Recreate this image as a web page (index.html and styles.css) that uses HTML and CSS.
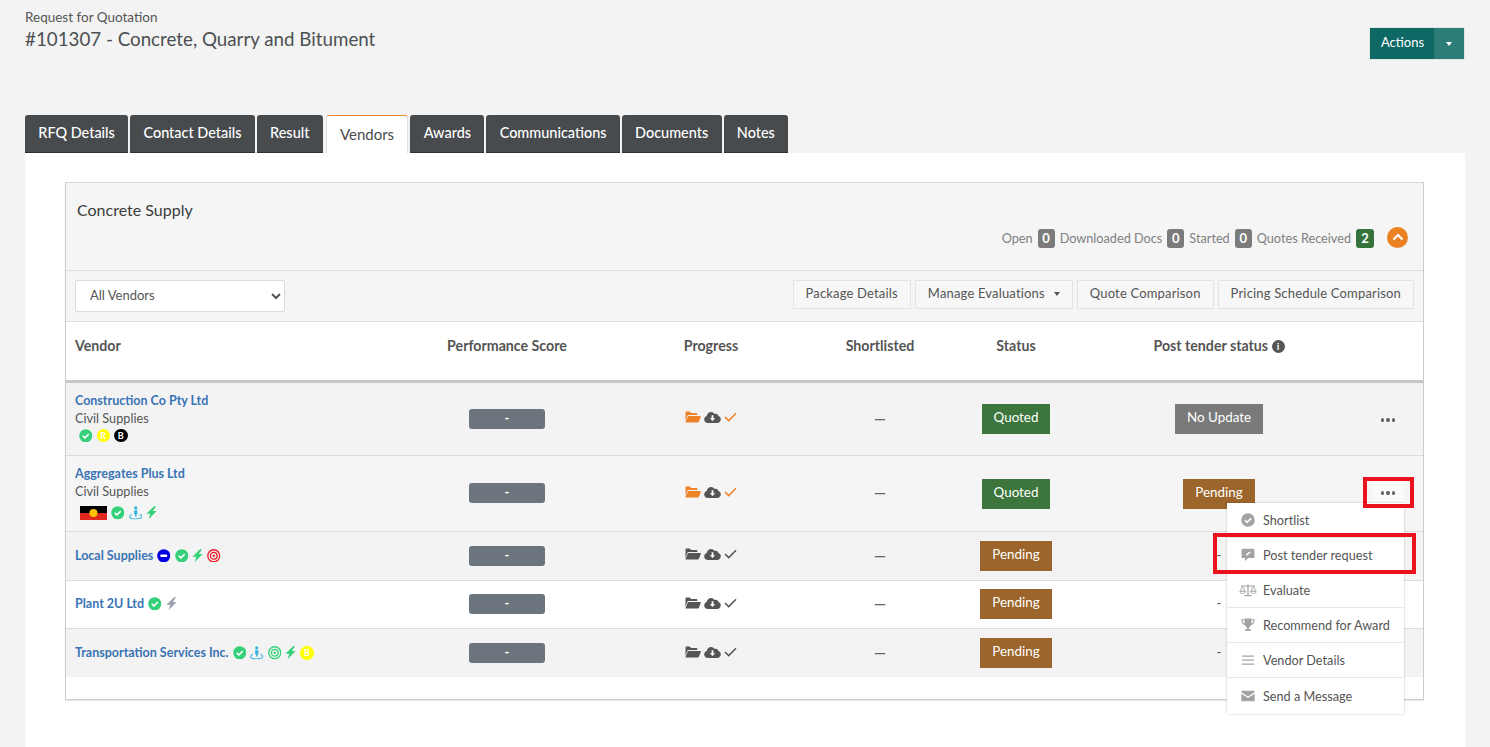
FILE: index.html
```html
<!DOCTYPE html>
<html lang="en">
<head>
<meta charset="utf-8">
<title>Request for Quotation</title>
<link rel="stylesheet" href="styles.css">
</head>
<body>
<svg class="defs" width="0" height="0" aria-hidden="true">
  <defs>
    <symbol id="i-check" viewBox="0 0 14 14"><circle cx="7" cy="7" r="6.800" fill="currentColor"/><path d="M3.900 7.200l2.200 2.100 4-4" fill="none" stroke="#fff" stroke-width="1.700"/></symbol>
    <symbol id="i-bolt" viewBox="0 0 12 14"><path d="M8.800 0L.4 8h4.300L2.800 14l8.800-9H7.300L11 0z" fill="currentColor"/></symbol>
    <symbol id="i-person" viewBox="0 0 14 14"><circle cx="7" cy="2" r="1.700" fill="currentColor"/><path d="M5.300 4.300h3.400v4.200h-.9V11H6.200V8.500h-.9z" fill="currentColor"/><path d="M3 8.500C1.500 9.100.7 9.900.7 10.800c0 1.500 2.800 2.700 6.300 2.700s6.300-1.200 6.300-2.700c0-.9-.8-1.700-2.300-2.300" fill="none" stroke="currentColor" stroke-width="1.200"/></symbol>
    <symbol id="i-target" viewBox="0 0 14 14"><circle cx="7" cy="7" r="6.200" fill="none" stroke="currentColor" stroke-width="1.400"/><circle cx="7" cy="7" r="3.500" fill="none" stroke="currentColor" stroke-width="1.400"/><circle cx="7" cy="7" r="1.300" fill="currentColor"/></symbol>
    <symbol id="i-minus" viewBox="0 0 14 14"><circle cx="7" cy="7" r="6.800" fill="#0000e0"/><rect x="3.500" y="5.800" width="7" height="2.400" rx=".6" fill="#fff"/></symbol>
    <symbol id="i-folder" viewBox="0 0 16 12"><path d="M.5 10V1.300C.5.800.9.500 1.300.500h3.400l1.400 1.400h5.400c.5 0 .8.300.8.800V4H4C3.200 4 2.500 4.400 2.200 5z" fill="currentColor"/><path d="M3.500 5h12c.3 0 .5.300.4.600l-2 5.200c-.2.400-.6.700-1 .7H.9c-.4 0-.6-.3-.4-.600L2.800 5.400c.1-.2.400-.4.700-.4z" fill="currentColor"/></symbol>
    <symbol id="i-cloud" viewBox="0 0 17 12"><path d="M4 12C1.800 12 .2 10.500.2 8.400c0-1.600 1-3 2.500-3.400C3 2.700 4.800 1 7 1c1.500 0 2.900.8 3.600 2 .4-.2.800-.3 1.200-.3 1.400 0 2.500 1 2.600 2.400 1.400.4 2.400 1.700 2.400 3.200C16.800 10.300 15.200 12 13.200 12z" fill="currentColor"/><path d="M7.600 4.200h1.800v3h1.800L8.500 10 5.800 7.200h1.800z" fill="#fff"/></symbol>
    <symbol id="i-tick" viewBox="0 0 13 10"><path d="M1 5l3.700 3.600L12 1.200" fill="none" stroke="currentColor" stroke-width="1.500"/></symbol>
    <symbol id="i-comment" viewBox="0 0 14 14"><path d="M1.500.8h11c.5 0 .9.400.9.900v7.500c0 .5-.4.900-.9.900H7.300L4 13V10.100H1.500c-.5 0-.9-.4-.9-.9V1.700c0-.5.400-.9.900-.9z" fill="currentColor"/><path d="M5 7.500l.3-1.500 3.200-2.600 1.100 1.200-3.100 2.600z" fill="#fff"/></symbol>
    <symbol id="i-scale" viewBox="0 0 18 14"><path d="M8.400 1.500h1.200V12h3v1.200H5.400V12h3zM2 2.600h14v1H2z" fill="currentColor"/><path d="M3.700 3.500L1 8.600c0 1.300 1.200 2 2.700 2s2.700-.7 2.700-2zM14.300 3.500l-2.700 5.100c0 1.300 1.200 2 2.700 2s2.700-.7 2.700-2z" fill="none" stroke="currentColor" stroke-width=".9"/><path d="M.8 8.300h5.800M11.400 8.300h5.800" stroke="currentColor" stroke-width="1"/></symbol>
    <symbol id="i-trophy" viewBox="0 0 14 14"><path d="M3.500.5h7v5c0 1.900-1.400 3.300-2.500 3.800v1.900h1.800V13H4.200v-1.800H6V9.300C4.900 8.800 3.500 7.400 3.500 5.500z" fill="currentColor"/><path d="M3.500 1.700H.9c0 3 1.100 4.300 3 4.700M10.500 1.700h2.600c0 3-1.100 4.300-3 4.700" fill="none" stroke="currentColor" stroke-width="1.100"/></symbol>
    <symbol id="i-bars" viewBox="0 0 14 14"><path d="M1 2.500h12v1.200H1zM1 6.500h12v1.200H1zM1 10.500h12v1.200H1z" fill="currentColor"/></symbol>
    <symbol id="i-env" viewBox="0 0 14 11"><path d="M.3 1.200C.3.600.7.200 1.300.200h11.400c.6 0 1 .4 1 1v.6L7 6 .3 1.800z" fill="currentColor"/><path d="M.3 3.200L7 7.400l6.700-4.200v6.600c0 .6-.4 1-1 1H1.300c-.6 0-1-.4-1-1z" fill="currentColor"/></symbol>
  </defs>
</svg>

<header class="page-head">
  <div class="head-text">
    <div class="kicker">Request for Quotation</div>
    <h1 class="title">#101307 - Concrete, Quarry and Bitument</h1>
  </div>
  <div class="actions"><span class="actions-main">Actions</span><span class="actions-caret"><i class="caret caret-white"></i></span></div>
</header>

<nav class="tabs">
  <a class="tab">RFQ Details</a>
  <a class="tab">Contact Details</a>
  <a class="tab">Result</a>
  <a class="tab tab-active">Vendors</a>
  <a class="tab">Awards</a>
  <a class="tab">Communications</a>
  <a class="tab">Documents</a>
  <a class="tab">Notes</a>
</nav>

<main class="sheet">
  <section class="panel">
    <div class="panel-head">
      <div class="panel-title">Concrete Supply</div>
      <div class="counts">
        <span>Open</span><b class="count">0</b>
        <span>Downloaded Docs</span><b class="count">0</b>
        <span>Started</span><b class="count">0</b>
        <span>Quotes Received</span><b class="count count-green">2</b>
        <span class="collapse"><svg width="12" height="8" viewBox="0 0 12 8"><path d="M1.500 6.500L6 2l4.500 4.500" fill="none" stroke="#fff" stroke-width="2.200"/></svg></span>
      </div>
    </div>
    <div class="toolbar">
      <select class="vendor-select"><option>All Vendors</option></select>
      <div class="tool-btns">
        <span class="tool-btn">Package Details</span>
        <span class="tool-btn">Manage Evaluations<i class="caret caret-dark"></i></span>
        <span class="tool-btn">Quote Comparison</span>
        <span class="tool-btn">Pricing Schedule Comparison</span>
      </div>
    </div>
    <table class="vendors">
      <colgroup>
        <col class="c-vendor"><col class="c-score"><col class="c-progress"><col class="c-short"><col class="c-status"><col class="c-post"><col class="c-act">
      </colgroup>
      <thead>
        <tr>
          <th class="left">Vendor</th><th>Performance Score</th><th>Progress</th><th>Shortlisted</th><th>Status</th>
          <th>Post tender status <span class="info">i</span></th><th></th>
        </tr>
      </thead>
      <tbody>
        <tr class="row-a shade">
          <td class="left">
            <div class="vcell">
              <a class="vname">Construction Co Pty Ltd</a>
              <div class="vsub">Civil Supplies</div>
              <div class="badges indent-a">
                <svg class="ic14 green"><use href="#i-check"/></svg>
                <span class="lettered yellow">R</span>
                <span class="lettered black">B</span>
              </div>
            </div>
          </td>
          <td><span class="score">-</span></td>
          <td><span class="prog"><svg class="fold orange"><use href="#i-folder"/></svg><svg class="cloud"><use href="#i-cloud"/></svg><svg class="tick orange"><use href="#i-tick"/></svg></span></td>
          <td><span class="dash">—</span></td>
          <td><span class="pill pill-green">Quoted</span></td>
          <td><span class="pill pill-grey">No Update</span></td>
          <td><span class="dots"><i></i><i></i><i></i></span></td>
        </tr>
        <tr class="row-b">
          <td class="left">
            <div class="vcell vcell-flag">
              <a class="vname">Aggregates Plus Ltd</a>
              <div class="vsub">Civil Supplies</div>
              <div class="badges indent-b">
                <svg class="flag" viewBox="0 0 27 14"><rect width="27" height="7" fill="#000"/><rect y="7" width="27" height="7" fill="#e0281f"/><circle cx="13.500" cy="7" r="4" fill="#ffc400"/></svg>
                <svg class="ic14 green"><use href="#i-check"/></svg>
                <svg class="ic14 blue"><use href="#i-person"/></svg>
                <svg class="bolt green"><use href="#i-bolt"/></svg>
              </div>
            </div>
          </td>
          <td><span class="score">-</span></td>
          <td><span class="prog"><svg class="fold orange"><use href="#i-folder"/></svg><svg class="cloud"><use href="#i-cloud"/></svg><svg class="tick orange"><use href="#i-tick"/></svg></span></td>
          <td><span class="dash">—</span></td>
          <td><span class="pill pill-green">Quoted</span></td>
          <td><span class="pill pill-brown">Pending</span></td>
          <td><span class="dots dots-open"><i></i><i></i><i></i></span></td>
        </tr>
        <tr class="row-c shade">
          <td class="left"><div class="inline-name"><a class="vname">Local Supplies</a>
            <svg class="ic14"><use href="#i-minus"/></svg>
            <svg class="ic14 green"><use href="#i-check"/></svg>
            <svg class="bolt green"><use href="#i-bolt"/></svg>
            <svg class="ic14 red"><use href="#i-target"/></svg></div>
          </td>
          <td><span class="score">-</span></td>
          <td><span class="prog"><svg class="fold"><use href="#i-folder"/></svg><svg class="cloud"><use href="#i-cloud"/></svg><svg class="tick"><use href="#i-tick"/></svg></span></td>
          <td><span class="dash">—</span></td>
          <td><span class="pill pill-brown">Pending</span></td>
          <td><span class="nil">-</span></td>
          <td></td>
        </tr>
        <tr class="row-d">
          <td class="left"><div class="inline-name"><a class="vname">Plant 2U Ltd</a>
            <svg class="ic14 green"><use href="#i-check"/></svg>
            <svg class="bolt slate"><use href="#i-bolt"/></svg></div>
          </td>
          <td><span class="score">-</span></td>
          <td><span class="prog"><svg class="fold"><use href="#i-folder"/></svg><svg class="cloud"><use href="#i-cloud"/></svg><svg class="tick"><use href="#i-tick"/></svg></span></td>
          <td><span class="dash">—</span></td>
          <td><span class="pill pill-brown">Pending</span></td>
          <td><span class="nil">-</span></td>
          <td></td>
        </tr>
        <tr class="row-c shade">
          <td class="left"><div class="inline-name"><a class="vname">Transportation Services Inc.</a>
            <svg class="ic14 green"><use href="#i-check"/></svg>
            <svg class="ic14 blue"><use href="#i-person"/></svg>
            <svg class="ic14 green"><use href="#i-target"/></svg>
            <svg class="bolt green"><use href="#i-bolt"/></svg>
            <span class="lettered yellow">B</span></div>
          </td>
          <td><span class="score">-</span></td>
          <td><span class="prog"><svg class="fold"><use href="#i-folder"/></svg><svg class="cloud"><use href="#i-cloud"/></svg><svg class="tick"><use href="#i-tick"/></svg></span></td>
          <td><span class="dash">—</span></td>
          <td><span class="pill pill-brown">Pending</span></td>
          <td><span class="nil">-</span></td>
          <td></td>
        </tr>
      </tbody>
    </table>

    <ul class="menu">
      <li><svg class="mi"><use href="#i-check"/></svg>Shortlist</li>
      <li><svg class="mi"><use href="#i-comment"/></svg>Post tender request</li>
      <li><svg class="mi mi-wide"><use href="#i-scale"/></svg>Evaluate</li>
      <li><svg class="mi"><use href="#i-trophy"/></svg>Recommend for Award</li>
      <li><svg class="mi"><use href="#i-bars"/></svg>Vendor Details</li>
      <li><svg class="mi"><use href="#i-env"/></svg>Send a Message</li>
    </ul>
    <div class="mark mark-dots"></div>
    <div class="mark mark-item"></div>
  </section>
</main>
</body>
</html>
```

FILE: styles.css
```css
* { box-sizing: border-box; }
html, body { height: 100%; }
body {
  margin: 0;
  height: 747px;
  overflow: hidden;
  background: #f3f3f3;
  color: #4c4c4c;
  font-family: Lato, "Open Sans", sans-serif;
  font-size: 14px;
  padding: 0 25px;
}
.defs { position: absolute; }

.page-head {
  display: flex;
  justify-content: space-between;
  align-items: flex-start;
  height: 115px;
  padding-top: 9px;
}
.kicker { font-size: 13.500px; line-height: 17px; color: #555; }
.title { margin: 1px 0 0; font-size: 18.750px; line-height: 23px; font-weight: 400; color: #4c4f52; }
.actions {
  display: flex;
  margin: 18px 0 0 0;
  height: 33px;
  border: 1px solid #e2e6e5;
  color: #fff;
  font-size: 13px;
  line-height: 28px;
}
.actions-main { width: 64px; padding-left: 1px; text-align: center; background: #0e6965; }
.actions-caret { width: 30px; display: flex; align-items: center; justify-content: center; background: #2d7d78; }
.caret { display: inline-block; border-left: 3.500px solid transparent; border-right: 3.500px solid transparent; border-top: 4px solid #fff; }
.caret-dark { border-top-color: #555; margin-left: 9px; vertical-align: 2px; }

.tabs { display: flex; gap: 2px; height: 38px; }
.tab {
  height: 38px;
  padding: 9px 13.300px 0;
  background: #484b4e;
  color: #fff;
  border-bottom: 1px solid #2f3234;
  border-radius: 3px 3px 0 0;
  font-size: 14.450px;
  line-height: 17px;
  font-weight: 500;
}
.tab-active {
  margin: 0 0 0 1px;
  padding-top: 10px;
  background: #fff;
  color: #4c4c4c;
  border: 1px solid #dedede;
  border-top: 1px solid #e58a35;
  border-bottom: 0;
  font-size: 15px;
  font-weight: 400;
}

.sheet { background: #fff; height: 594px; padding: 29px 41px 0 40px; }
.panel { position: relative; height: 518px; border: 1px solid #ccc; border-top-color: #d4d4d4; background: #fff; box-shadow: 0 1px 1px rgba(0,0,0,.08); }
.panel-head { height: 88px; background: #f5f5f5; border-bottom: 1px solid #ddd; padding: 17px 15px 0 11px; }
.panel-title { font-size: 16px; line-height: 19px; color: #3c3c3c; }
.counts { display: flex; justify-content: flex-end; align-items: center; gap: 5px; margin-top: 6px; height: 26px; font-size: 12.700px; color: #808080; }
.count { min-width: 17px; height: 19px; padding: 0 4px; border-radius: 3px; background: #7b7b7b; color: #fff; font-size: 13px; line-height: 19px; text-align: center; }
.count-green { background: #35733a; min-width: 18px; }
.collapse { width: 21px; height: 21px; border-radius: 50%; background: #ec8121; display: flex; align-items: center; justify-content: center; margin: -2px 0 0 8px; }

.toolbar { height: 51px; display: flex; justify-content: space-between; padding: 9px 9px 0; background: #f5f5f5; border-bottom: 1px solid #ddd; }
.vendor-select { width: 210px; height: 32px; padding: 0 0 2px 10px; border: 1px solid #ddd; background: #fff; color: #555; font: 13px Lato, sans-serif; border-radius: 2px; }
.tool-btns { display: flex; gap: 4px; }
.tool-btn { height: 29px; padding: 0 12px; border: 1px solid #e3e3e3; background: #f7f7f7; font-size: 13px; line-height: 25px; color: #555; letter-spacing: .17px; }

.vendors { width: 1357px; table-layout: fixed; border-collapse: collapse; font-size: 13px; }
.c-vendor { width: 339px; } .c-score { width: 204px; } .c-progress { width: 204px; }
.c-short { width: 134px; } .c-status { width: 138px; } .c-post { width: 268px; } .c-act { width: 70px; }
.vendors th { height: 59px; border-bottom: 3px solid #c6c6c6; font-size: 14.200px; font-weight: 700; color: #555; text-align: center; padding: 0 0 10px; }
.vendors td { padding: 0; text-align: center; border-bottom: 1px solid #dcdcdc; color: #555; }
.vendors th.left, .vendors td.left { text-align: left; padding-left: 9px; }
.vendors tbody tr:last-child td { border-bottom: 0; }
.shade td { background: #f3f3f3; }
.row-b td { background: #f5f5f5; height: 76px; }
.row-a td { height: 74px; }
.row-c td { height: 49px; }
.row-d td { height: 48px; }

.info { display: inline-block; width: 13px; height: 13px; border-radius: 50%; background: #555; color: #fff; font-size: 10px; line-height: 13px; text-align: center; vertical-align: 1px; }
.vname { color: #3a74b4; font-size: 12.500px; font-weight: 700; line-height: 18px; }
.vcell .vname { display: block; margin-top: 1px; line-height: 17px; }
.vsub { color: #555; font-size: 12.700px; line-height: 18px; }
.vcell { padding-bottom: 2px; }
.vcell-flag { padding-bottom: 0; }
.badges { display: flex; align-items: center; gap: 4px; height: 18px; }
.vcell-flag .badges { height: 22px; padding-top: 4px; }
.indent-a { padding-left: 4px; }
.indent-b { padding-left: 5px; }
.inline-name { display: flex; align-items: center; gap: 4px; }
.ic14 { width: 13.500px; height: 13.500px; flex: none; }
.bolt { width: 11px; height: 13.500px; flex: none; }
.flag { width: 27px; height: 14px; flex: none; }
.green { color: #35d07a; }
.blue { color: #35b4e0; }
.red { color: #f01d2c; }
.slate { color: #9aa3ad; }
.orange { color: #ed8227; }
.lettered { width: 13.500px; height: 13.500px; flex: none; border-radius: 50%; font-size: 9px; font-weight: 700; line-height: 13.500px; text-align: center; }
.yellow { background: #ffff00; color: #fff; }
.black { background: #000; color: #fff; }

.score { display: inline-block; width: 76px; height: 20px; border-radius: 3px; background: #6c757d; color: #fff; font-size: 13px; font-weight: 700; line-height: 19px; vertical-align: middle; }
.prog { display: inline-flex; align-items: center; gap: 3px; padding-bottom: 4px; color: #555; vertical-align: middle; }
.fold { width: 16px; height: 12px; }
.cloud { width: 17px; height: 12px; color: #555; }
.tick { width: 13px; height: 10px; }
.dash { display: inline-block; padding-bottom: 2px; font-size: 15px; font-weight: 700; color: #666; vertical-align: middle; }
.nil { display: inline-block; padding-bottom: 2px; }
.pill { display: inline-block; height: 30px; padding: 0 12px; color: #fff; font-size: 13.400px; line-height: 26px; vertical-align: middle; }
.row-b .pill { margin-top: 2px; }
.pill-green { background: #3c763d; }
.pill-brown { background: #9c652b; }
.pill-grey { background: #7a7a7a; }
.dots { display: inline-flex; align-items: center; justify-content: center; gap: 2px; vertical-align: middle; }
.dots-open { width: 32px; height: 25px; background: #fafafa; }
.dots i { width: 3.500px; height: 3.500px; border-radius: 50%; background: #666; }

.menu {
  position: absolute;
  left: 1161px;
  top: 320px;
  width: 177px;
  margin: 0;
  padding: 0;
  list-style: none;
  background: #fff;
  box-shadow: 0 0 2px rgba(0,0,0,.25);
  font-size: 12.700px;
  color: #555;
}
.menu li { display: flex; align-items: center; height: 35px; padding-left: 14px; border-bottom: 1px solid #e7e7e7; }
.menu li:last-child { height: 36px; border-bottom: 0; }
.mi { width: 14px; height: 14px; margin-right: 8px; color: #a3a3a3; flex: none; }
.mi-wide { width: 18px; margin-left: -2px; margin-right: 6px; }
.mark { position: absolute; border: 4px solid #e8131d; }
.mark-dots { left: 1297px; top: 294px; width: 51px; height: 31px; }
.mark-item { left: 1147px; top: 350px; width: 203px; height: 41px; }
```
